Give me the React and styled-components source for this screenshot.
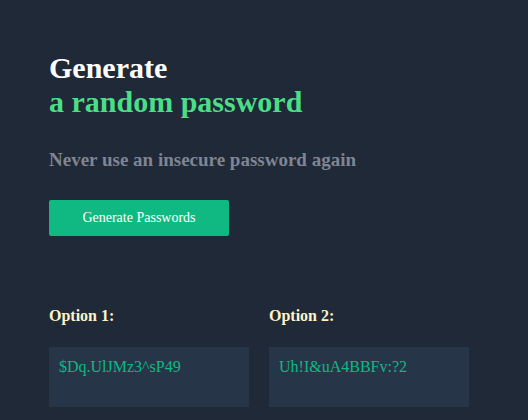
import React from "react";
import styled, { createGlobalStyle } from "styled-components";

const Global = createGlobalStyle`
  html, body { margin: 0; padding: 0; background: #1f2937; }
  body { font-family: "Liberation Serif", "Times New Roman", serif; }
`;

const Page = styled.main`
  min-height: 420px;
  box-sizing: border-box;
  background: #1f2937;
  padding: 51px 49px 0;
`;

const Title = styled.h1`
  margin: 0;
  font-size: 30px;
  font-weight: 700;
  line-height: 34px;
  color: #ffffff;
`;

const Accent = styled.span`
  display: block;
  color: #4adf86;
`;

const Subtitle = styled.h2`
  margin: 30px 0 0;
  font-size: 19px;
  font-weight: 700;
  line-height: 22px;
  color: #7f8593;
`;

const Button = styled.button`
  margin-top: 29px;
  width: 180px;
  height: 36px;
  border: none;
  border-radius: 2px;
  background: #10b981;
  color: #ffffff;
  font-family: "Liberation Serif", "Times New Roman", serif;
  font-size: 14px;
  cursor: pointer;
`;

const Options = styled.section`
  margin-top: 71px;
  display: flex;
  gap: 20px;
`;

const Option = styled.div`
  display: flex;
  flex-direction: column;
  width: 200px;
`;

const Label = styled.label`
  font-size: 16px;
  font-weight: 700;
  color: #fef3c7;
  line-height: 18px;
`;

const PasswordBox = styled.div`
  margin-top: 22px;
  height: 60px;
  box-sizing: border-box;
  padding: 10px 10px;
  background: #273549;
  color: #10b981;
  font-size: 16px;
  line-height: 20px;
`;

const passwords = ["$Dq.UlJMz3^sP49", "Uh!I&uA4BBFv:?2"];

export default function App() {
  return (
    <>
      <Global />
      <Page>
        <Title>
          Generate
          <Accent>a random password</Accent>
        </Title>
        <Subtitle>Never use an insecure password again</Subtitle>
        <Button>Generate Passwords</Button>
        <Options>
          {passwords.map((p, i) => (
            <Option key={i}>
              <Label>Option {i + 1}:</Label>
              <PasswordBox>{p}</PasswordBox>
            </Option>
          ))}
        </Options>
      </Page>
    </>
  );
}
